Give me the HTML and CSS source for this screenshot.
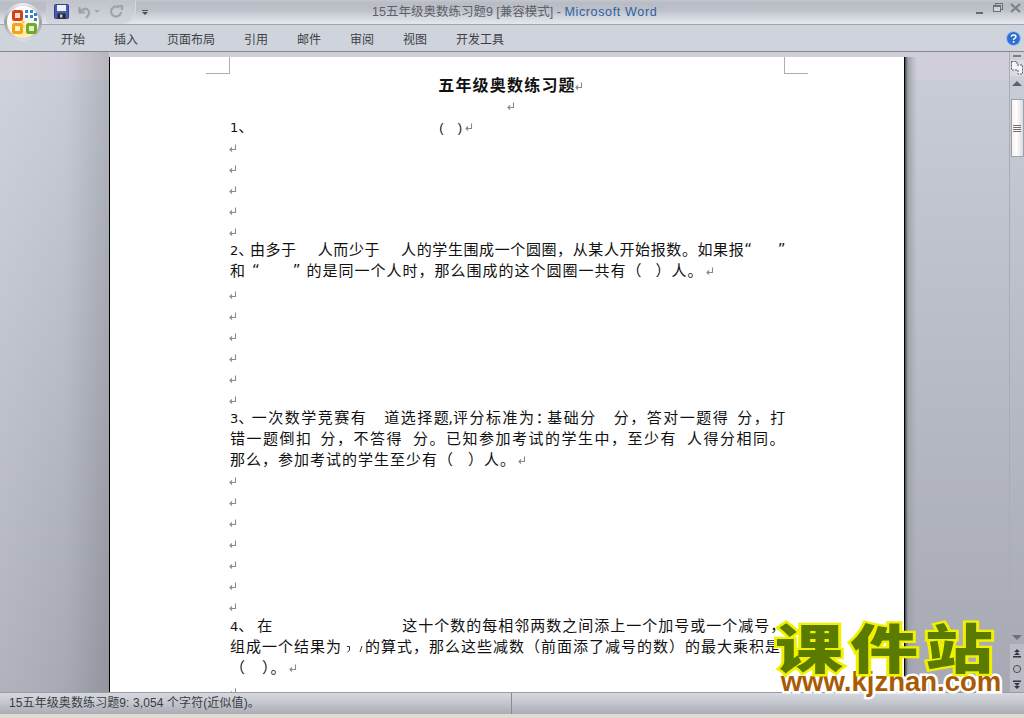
FILE: index.html
```html
<!DOCTYPE html>
<html lang="zh">
<head>
  <meta charset="UTF-8">
  <title>15五年级奥数练习题9 - Microsoft Word</title>
  <link rel="stylesheet" href="styles.css">
</head>
<body>
  <svg class="defs" width="0" height="0">
    <symbol id="ret" viewBox="0 0 9 8">
      <path d="M7.5 0.5V5.5H2M4 3.5L2 5.5L4 7.5" fill="none" stroke="#8a8a8a" stroke-width="1.1"/>
    </symbol>
  </svg>

  <div class="window">
    <div class="titlebar">
      <svg class="office-btn" width="40" height="40" viewBox="0 0 40 40">
        <defs>
          <radialGradient id="orb" cx="50%" cy="85%" r="70%">
            <stop offset="0" stop-color="#ffe9a0"/>
            <stop offset="0.6" stop-color="#fbf6e6"/>
            <stop offset="1" stop-color="#ffffff"/>
          </radialGradient>
          <linearGradient id="ring" x1="0" y1="0" x2="0" y2="1">
            <stop offset="0" stop-color="#eeeef0"/>
            <stop offset="0.5" stop-color="#9a9da3"/>
            <stop offset="1" stop-color="#dfe0e3"/>
          </linearGradient>
        </defs>
        <circle cx="20" cy="20" r="19" fill="url(#ring)"/>
        <circle cx="20" cy="20" r="16" fill="url(#orb)"/>
        <rect x="10.5" y="9.5" width="8" height="8" rx="1" fill="#fbe3cf" stroke="#d8401a" stroke-width="3"/>
        <g fill="#2f84d0">
          <rect x="22" y="8" width="3" height="3"/>
          <rect x="27" y="8" width="3" height="3"/>
          <rect x="31" y="11" width="3" height="3"/>
          <rect x="22" y="13" width="3" height="3"/>
          <rect x="27" y="13" width="3" height="3"/>
          <rect x="31" y="16" width="3" height="3"/>
        </g>
        <rect x="10.5" y="22.5" width="8" height="8" rx="1" fill="#fdf0c4" stroke="#f3a313" stroke-width="3"/>
        <rect x="19" y="19" width="2.5" height="2.5" fill="#f6c84a"/>
        <rect x="19" y="23" width="2.5" height="2.5" fill="#f6c84a"/>
        <rect x="24.5" y="22.5" width="8" height="8" rx="1" fill="#e4f0c8" stroke="#6cab28" stroke-width="3"/>
      </svg>
      <div class="qat">
        <svg width="15" height="15" viewBox="0 0 15 15">
          <rect x="0.5" y="0.5" width="14" height="14" rx="1" fill="#4a5cb4" stroke="#333f8c"/>
          <rect x="3" y="1" width="9" height="6" fill="#eef1f8"/>
          <rect x="3.5" y="9.5" width="8" height="5" fill="#24282f"/>
          <rect x="6" y="10.5" width="2.5" height="3" fill="#c8ccd4"/>
        </svg>
        <svg width="14" height="14" viewBox="0 0 14 14">
          <path d="M2.5 2V7.5H8M3 7C5 4 9 3 11 5C13 7 12 10 9 13" fill="none" stroke="#9ea2aa" stroke-width="2.2"/>
        </svg>
        <span class="qat-drop"></span>
        <svg class="redo" width="13" height="14" viewBox="0 0 13 14">
          <path d="M9 2.5A5 5 0 1 0 11 7M8 1H12V5" fill="none" stroke="#9ea2aa" stroke-width="2.2"/>
        </svg>
      </div>
      <span class="qat-more"></span>
      <div class="doc-title">15五年级奥数练习题9 [兼容模式] - <span class="app-name">Microsoft Word</span></div>
      <div class="win-btns">
        <svg width="8" height="8" viewBox="0 0 8 8" class="win-min"><rect y="5" width="7" height="2" fill="#666a72"/></svg>
        <svg width="10" height="10" viewBox="0 0 10 10">
          <rect x="2.5" y="0.5" width="7" height="6" fill="none" stroke="#6c7078"/>
          <rect x="0.5" y="2.5" width="7" height="6" fill="#d2d5dc" stroke="#6c7078"/>
          <rect x="0.5" y="2.5" width="7" height="1.5" fill="#6c7078"/>
        </svg>
        <svg class="win-close" width="11" height="10" viewBox="0 0 11 10"><path d="M1 1L10 9M10 1L1 9" stroke="#7a7e86" stroke-width="2"/></svg>
      </div>
    </div>

    <div class="ribbon">
      <div class="tabs">
        <span>开始</span>
        <span>插入</span>
        <span>页面布局</span>
        <span>引用</span>
        <span>邮件</span>
        <span>审阅</span>
        <span>视图</span>
        <span>开发工具</span>
      </div>
      <svg width="15" height="15" viewBox="0 0 15 15">
        <circle cx="7.5" cy="7.5" r="7" fill="#2f6fd0" stroke="#a9c4ee"/>
        <path d="M5.3 5.6C5.5 3.6 9.8 3.4 9.9 5.6C10 7.3 7.6 7.2 7.6 9" fill="none" stroke="#fff" stroke-width="1.5"/>
        <rect x="6.8" y="10" width="1.6" height="1.7" fill="#fff"/>
      </svg>
    </div>

    <div class="workspace">
      <div class="gutter"></div>
      <div class="page">
        <span class="crop crop-left"></span>
        <span class="crop crop-right"></span>

        <div class="doc-head">五年级奥数练习题<svg class="ret"><use href="#ret"/></svg></div>
        <div class="line center"><svg class="ret"><use href="#ret"/></svg></div>
        <div class="line"><span class="num">1</span>、<i class="gap gap-185"></i><span class="lat">(</span><i class="gap gap-13"></i><span class="lat">)</span><svg class="ret"><use href="#ret"/></svg></div>
        <div class="line blank"><svg class="ret"><use href="#ret"/></svg></div>
        <div class="line blank"><svg class="ret"><use href="#ret"/></svg></div>
        <div class="line blank"><svg class="ret"><use href="#ret"/></svg></div>
        <div class="line blank"><svg class="ret"><use href="#ret"/></svg></div>
        <div class="line blank"><svg class="ret"><use href="#ret"/></svg></div>

        <div class="para q2">
          <div class="line tight"><span class="num">2</span><span class="dun">、</span>由多于<i class="gap gap-21"></i>人而少于<i class="gap gap-21"></i>人的学生围成一个圆圈，从某人开始报数。如果报“<i class="gap gap-25"></i>”</div>
          <div class="line even">和<i class="gap gap-6"></i>“<i class="gap gap-32"></i>”<i class="gap gap-5"></i>的是同一个人时，那么围成的这个圆圈一共有（<i class="gap gap-13"></i>）人。<svg class="ret"><use href="#ret"/></svg></div>
        </div>
        <div class="line blank"><svg class="ret"><use href="#ret"/></svg></div>
        <div class="line blank"><svg class="ret"><use href="#ret"/></svg></div>
        <div class="line blank"><svg class="ret"><use href="#ret"/></svg></div>
        <div class="line blank"><svg class="ret"><use href="#ret"/></svg></div>
        <div class="line blank"><svg class="ret"><use href="#ret"/></svg></div>
        <div class="line blank"><svg class="ret"><use href="#ret"/></svg></div>

        <div class="para q3">
          <div class="line wide"><span class="num">3</span><span class="dun">、</span>一次数学竞赛有<i class="gap gap-17"></i>道选择题<span class="comma">,</span>评分标准为<span class="colon">：</span>基础分<i class="gap gap-17"></i>分，答对一题得<i class="gap gap-8"></i>分，打</div>
          <div class="line wide">错一题倒扣<i class="gap gap-8"></i>分，不答得<i class="gap gap-10"></i>分。已知参加考试的学生中，至少有<i class="gap gap-10"></i>人得分相同。</div>
          <div class="line even">那么，参加考试的学生至少有（<i class="gap gap-14"></i>）人。<svg class="ret"><use href="#ret"/></svg></div>
        </div>
        <div class="line blank"><svg class="ret"><use href="#ret"/></svg></div>
        <div class="line blank"><svg class="ret"><use href="#ret"/></svg></div>
        <div class="line blank"><svg class="ret"><use href="#ret"/></svg></div>
        <div class="line blank"><svg class="ret"><use href="#ret"/></svg></div>
        <div class="line blank"><svg class="ret"><use href="#ret"/></svg></div>
        <div class="line blank"><svg class="ret"><use href="#ret"/></svg></div>
        <div class="line blank"><svg class="ret"><use href="#ret"/></svg></div>

        <div class="para q4">
          <div class="line even"><span class="num">4</span><span class="dun">、</span>在<i class="gap gap-129"></i>这十个数的每相邻两数之间添上一个加号或一个减号，</div>
          <div class="line even">组成一个结果为<svg class="stray" width="23" height="8" viewBox="0 0 23 8"><path d="M5 1.5H7.5V5.5L5.5 7M20 1L18 7" fill="none" stroke="#333"/></svg>的算式，那么这些减数（前面添了减号的数）的最大乘积是</div>
          <div class="line even">（<i class="gap gap-16"></i>）。<svg class="ret"><use href="#ret"/></svg></div>
        </div>
        <div class="line blank"><svg class="ret"><use href="#ret"/></svg></div>
      </div>
      <div class="gutter-right"></div>

      <div class="scrollbar">
        <span class="split-grip"></span>
        <svg class="ruler-btn" width="14" height="16" viewBox="0 0 14 16">
          <path d="M1.5 1.5H7V5H12.5V14H8V10H1.5Z" fill="#f4f5f8" stroke="#5c6068" stroke-dasharray="2 1"/>
        </svg>
        <span class="arrow-up"></span>
        <div class="thumb"><span class="grip"></span></div>
        <span class="track"></span>
        <span class="arrow-down"></span>
        <div class="browse">
          <svg width="10" height="9" viewBox="0 0 10 9"><path d="M5 0L8 3H2ZM5 3L8 6H2Z" fill="#33363c"/><rect x="1" y="7" width="8" height="1.5" fill="#33363c"/></svg>
          <svg width="10" height="10" viewBox="0 0 10 10"><circle cx="5" cy="5" r="3.6" fill="#b4b7bd" stroke="#4c4f55"/></svg>
          <svg width="10" height="9" viewBox="0 0 10 9"><rect x="1" y="0.5" width="8" height="1.5" fill="#33363c"/><path d="M5 6L2 3H8ZM5 9L2 6H8Z" fill="#33363c"/></svg>
        </div>
      </div>
    </div>

    <div class="statusbar">
      <div class="status-left">15五年级奥数练习题9: 3,054 个字符(近似值)。</div>
      <div class="status-right"></div>
    </div>
    <div class="window-foot"></div>
  </div>

  <div class="stamp">
    <div class="stamp-cn"><span>课件站</span></div>
    <div class="stamp-url">www.kjzhan.com</div>
  </div>
</body>
</html>
```

FILE: styles.css
```css
* {
  margin: 0;
  padding: 0;
  box-sizing: border-box;
}

html, body {
  width: 1024px;
  height: 718px;
  overflow: hidden;
}

body {
  position: relative;
  font-family: "Liberation Sans", "Noto Sans CJK SC", sans-serif;
  background: #e0ddd2;
}

.defs {
  display: block;
  height: 0;
}

.window {
  display: flex;
  flex-direction: column;
  height: 718px;
}

/* title bar */
.titlebar {
  position: relative;
  display: flex;
  align-items: center;
  height: 25px;
  background: linear-gradient(#c3c6cd 0, #b9bcc5 3px, #bcc0c8 10px, #d0d3da 16px, #e2e5ec 23px, #e2e5ec 24px);
  border-bottom: 1px solid #a3a6ae;
  flex-shrink: 0;
}

.office-btn {
  position: absolute;
  left: 3px;
  top: 2px;
  z-index: 2;
}

.qat {
  display: flex;
  align-items: center;
  width: 90px;
  height: 23px;
  margin-left: 46px;
  padding-left: 8px;
  gap: 8px;
  border: 1px solid #d6d9df;
  border-top: none;
  border-left: none;
  border-radius: 0 0 14px 4px / 0 0 14px 4px;
  background: linear-gradient(#c0c3cb, #d3d6dd);
}

.qat-drop {
  width: 0;
  height: 0;
  margin-left: -5px;
  border: 3px solid transparent;
  border-top: 3px solid #a2a6ae;
  border-bottom: none;
}

.redo {
  margin-left: 2px;
}

.qat-more {
  width: 6px;
  height: 5px;
  margin-left: 6px;
  border-top: 1px solid #4a4d54;
  position: relative;
}

.qat-more::after {
  content: "";
  position: absolute;
  left: 0;
  top: 1px;
  border: 3px solid transparent;
  border-top: 3px solid #4a4d54;
  border-bottom: none;
}

.doc-title {
  position: absolute;
  left: 372px;
  top: 4px;
  font-size: 12.5px;
  line-height: 17px;
  white-space: nowrap;
  color: #5d6067;
}

.app-name {
  color: #2f62a2;
  letter-spacing: 0.65px;
}

.win-btns {
  position: absolute;
  right: 3px;
  top: 3px;
  display: flex;
  align-items: flex-start;
  gap: 9px;
}

.win-min {
  margin-top: 4px;
}

.win-close {
  margin-left: -2px;
}

/* ribbon tabs */
.ribbon {
  display: flex;
  align-items: center;
  justify-content: space-between;
  height: 27px;
  padding: 0 3px 0 61px;
  background: #cfd3dc;
  border-bottom: 1px solid #85878d;
  flex-shrink: 0;
}

.tabs {
  display: flex;
  gap: 29px;
  font-size: 12px;
  color: #3d3f45;
}

/* document area */
.workspace {
  position: relative;
  display: flex;
  height: 640px;
  background: linear-gradient(#d0cfd9 0, #d0cfd9 28px, #c8ccd5 28px, #a6a9b3 100%);
  flex-shrink: 0;
}

.gutter {
  width: 109px;
  flex-shrink: 0;
  background: linear-gradient(90deg, rgba(255, 255, 255, 0.12), rgba(255, 255, 255, 0) 60%, rgba(0, 0, 0, 0.12));
}

.gutter-right {
  width: 104px;
  flex-shrink: 0;
  margin-top: 5px;
  background: linear-gradient(90deg, #4a4c52 0, #9ea1a9 3px, rgba(160, 163, 172, 0.4) 8px, rgba(0, 0, 0, 0) 12px);
}

.page {
  position: relative;
  width: 796px;
  flex-shrink: 0;
  margin-top: 5px;
  padding: 18px 119px 0 120px;
  background: #fff;
  border-left: 1px solid #000;
  border-right: 1px solid #000;
  overflow: hidden;
  font-family: "DejaVu Sans", "Noto Sans CJK SC", sans-serif;
  font-size: 15px;
  color: #111;
}

.crop {
  position: absolute;
  top: 0;
  width: 24px;
  height: 17px;
  border-bottom: 1px solid #aeaeae;
}

.crop-left {
  left: 96px;
  border-right: 1px solid #aeaeae;
}

.crop-right {
  right: 96px;
  border-left: 1px solid #aeaeae;
}

.doc-head {
  height: 21px;
  padding-left: 6px;
  line-height: 21px;
  font-size: 16px;
  font-weight: 700;
  letter-spacing: 1.2px;
  text-align: center;
  white-space: nowrap;
}

.doc-head .ret {
  margin-left: -2px;
}

.line {
  height: 21px;
  line-height: 21px;
  letter-spacing: 1px;
  white-space: nowrap;
}

.center {
  padding-left: 4px;
  text-align: center;
}

.tight {
  letter-spacing: 0.6px;
}

.wide {
  letter-spacing: 1.5px;
}

.even {
  letter-spacing: 1px;
}

.q2 {
  margin: -3px 0 3px;
}

.q3 {
  margin: -3px 0 0;
}

.q4 {
  margin: -2px 0 3px;
}

.num {
  font-size: 13px;
  letter-spacing: 0;
}

.q2 .dun {
  margin-right: -4px;
}

.q3 .dun {
  margin-right: -3px;
}

.q4 .dun {
  margin-right: 3px;
}

.comma {
  margin-left: -2px;
  letter-spacing: 0;
}

.colon {
  margin-right: -5px;
}

.lat {
  font-family: "Liberation Sans", sans-serif;
  font-size: 13px;
}

.ret {
  width: 9px;
  height: 8px;
  margin-left: 1px;
  vertical-align: 1px;
}

.blank .ret {
  margin-left: -2px;
}

.stray {
  vertical-align: -1px;
}

.gap {
  display: inline-block;
}

.gap-5 { width: 5px; }
.gap-6 { width: 6px; }
.gap-8 { width: 8px; }
.gap-10 { width: 10px; }
.gap-13 { width: 13px; }
.gap-14 { width: 14px; }
.gap-16 { width: 16px; }
.gap-17 { width: 17px; }
.gap-21 { width: 21px; }
.gap-25 { width: 25px; }
.gap-32 { width: 32px; }
.gap-129 { width: 129px; }
.gap-185 { width: 185px; }

/* right scrollbar */
.scrollbar {
  display: flex;
  flex-direction: column;
  align-items: center;
  width: 15px;
  flex-shrink: 0;
  border-left: 1px solid #a9acb4;
}

.split-grip {
  width: 8px;
  height: 2px;
  margin-top: 3px;
  background: #7a7d84;
}

.ruler-btn {
  margin-top: 3px;
  background: #d9dce3;
}

.arrow-up {
  width: 0;
  height: 0;
  margin-top: 5px;
  border: 5px solid transparent;
  border-top: none;
  border-bottom: 5px solid #5d6068;
}

.thumb {
  display: flex;
  align-items: center;
  justify-content: center;
  width: 13px;
  height: 58px;
  margin-top: 13px;
  background: linear-gradient(90deg, #f7f0e4, #ffffff 40%, #d9dbe1);
  border: 1px solid #9fa2aa;
  flex-shrink: 0;
}

.grip {
  width: 8px;
  height: 7px;
  background: repeating-linear-gradient(#6f7278 0, #6f7278 1px, transparent 1px, transparent 2px);
}

.track {
  flex-grow: 1;
}

.arrow-down {
  width: 0;
  height: 0;
  border: 5px solid transparent;
  border-bottom: none;
  border-top: 5px solid #6d7078;
  margin-bottom: 4px;
}

.browse {
  display: flex;
  flex-direction: column;
  align-items: center;
  gap: 6px;
  width: 100%;
  padding: 5px 0 3px;
  background: #b9bcc4;
}

/* status bar */
.statusbar {
  display: flex;
  height: 22px;
  border-top: 1px solid #9a9da4;
  background: linear-gradient(#d5d8de, #c9ccd3 35%, #a9acb4);
  flex-shrink: 0;
}

.status-left {
  width: 512px;
  padding-left: 9px;
  font-size: 12px;
  line-height: 20px;
  letter-spacing: 0.1px;
  color: #3b3d42;
  border-right: 1px solid #888b92;
}

.window-foot {
  flex-grow: 1;
  background: #e0ddd2;
}

/* site stamp over the corner */
.stamp {
  position: absolute;
  left: 775px;
  top: 619px;
  width: 232px;
}

.stamp-cn {
  height: 55px;
}

.stamp-cn span {
  display: block;
  font-family: "Noto Sans CJK SC", sans-serif;
  font-size: 68px;
  line-height: 70px;
  font-weight: 900;
  letter-spacing: 7px;
  white-space: nowrap;
  color: #5a7b00;
  -webkit-text-stroke: 6px #f0f000;
  paint-order: stroke fill;
  transform: scaleY(0.78);
  transform-origin: left top;
}

.stamp-url {
  margin-top: -4px;
  text-align: center;
  font-family: "Liberation Sans", sans-serif;
  font-size: 27.5px;
  line-height: 24px;
  font-weight: 700;
  white-space: nowrap;
  color: #a85a05;
  -webkit-text-stroke: 5px #fff;
  paint-order: stroke fill;
}
```
